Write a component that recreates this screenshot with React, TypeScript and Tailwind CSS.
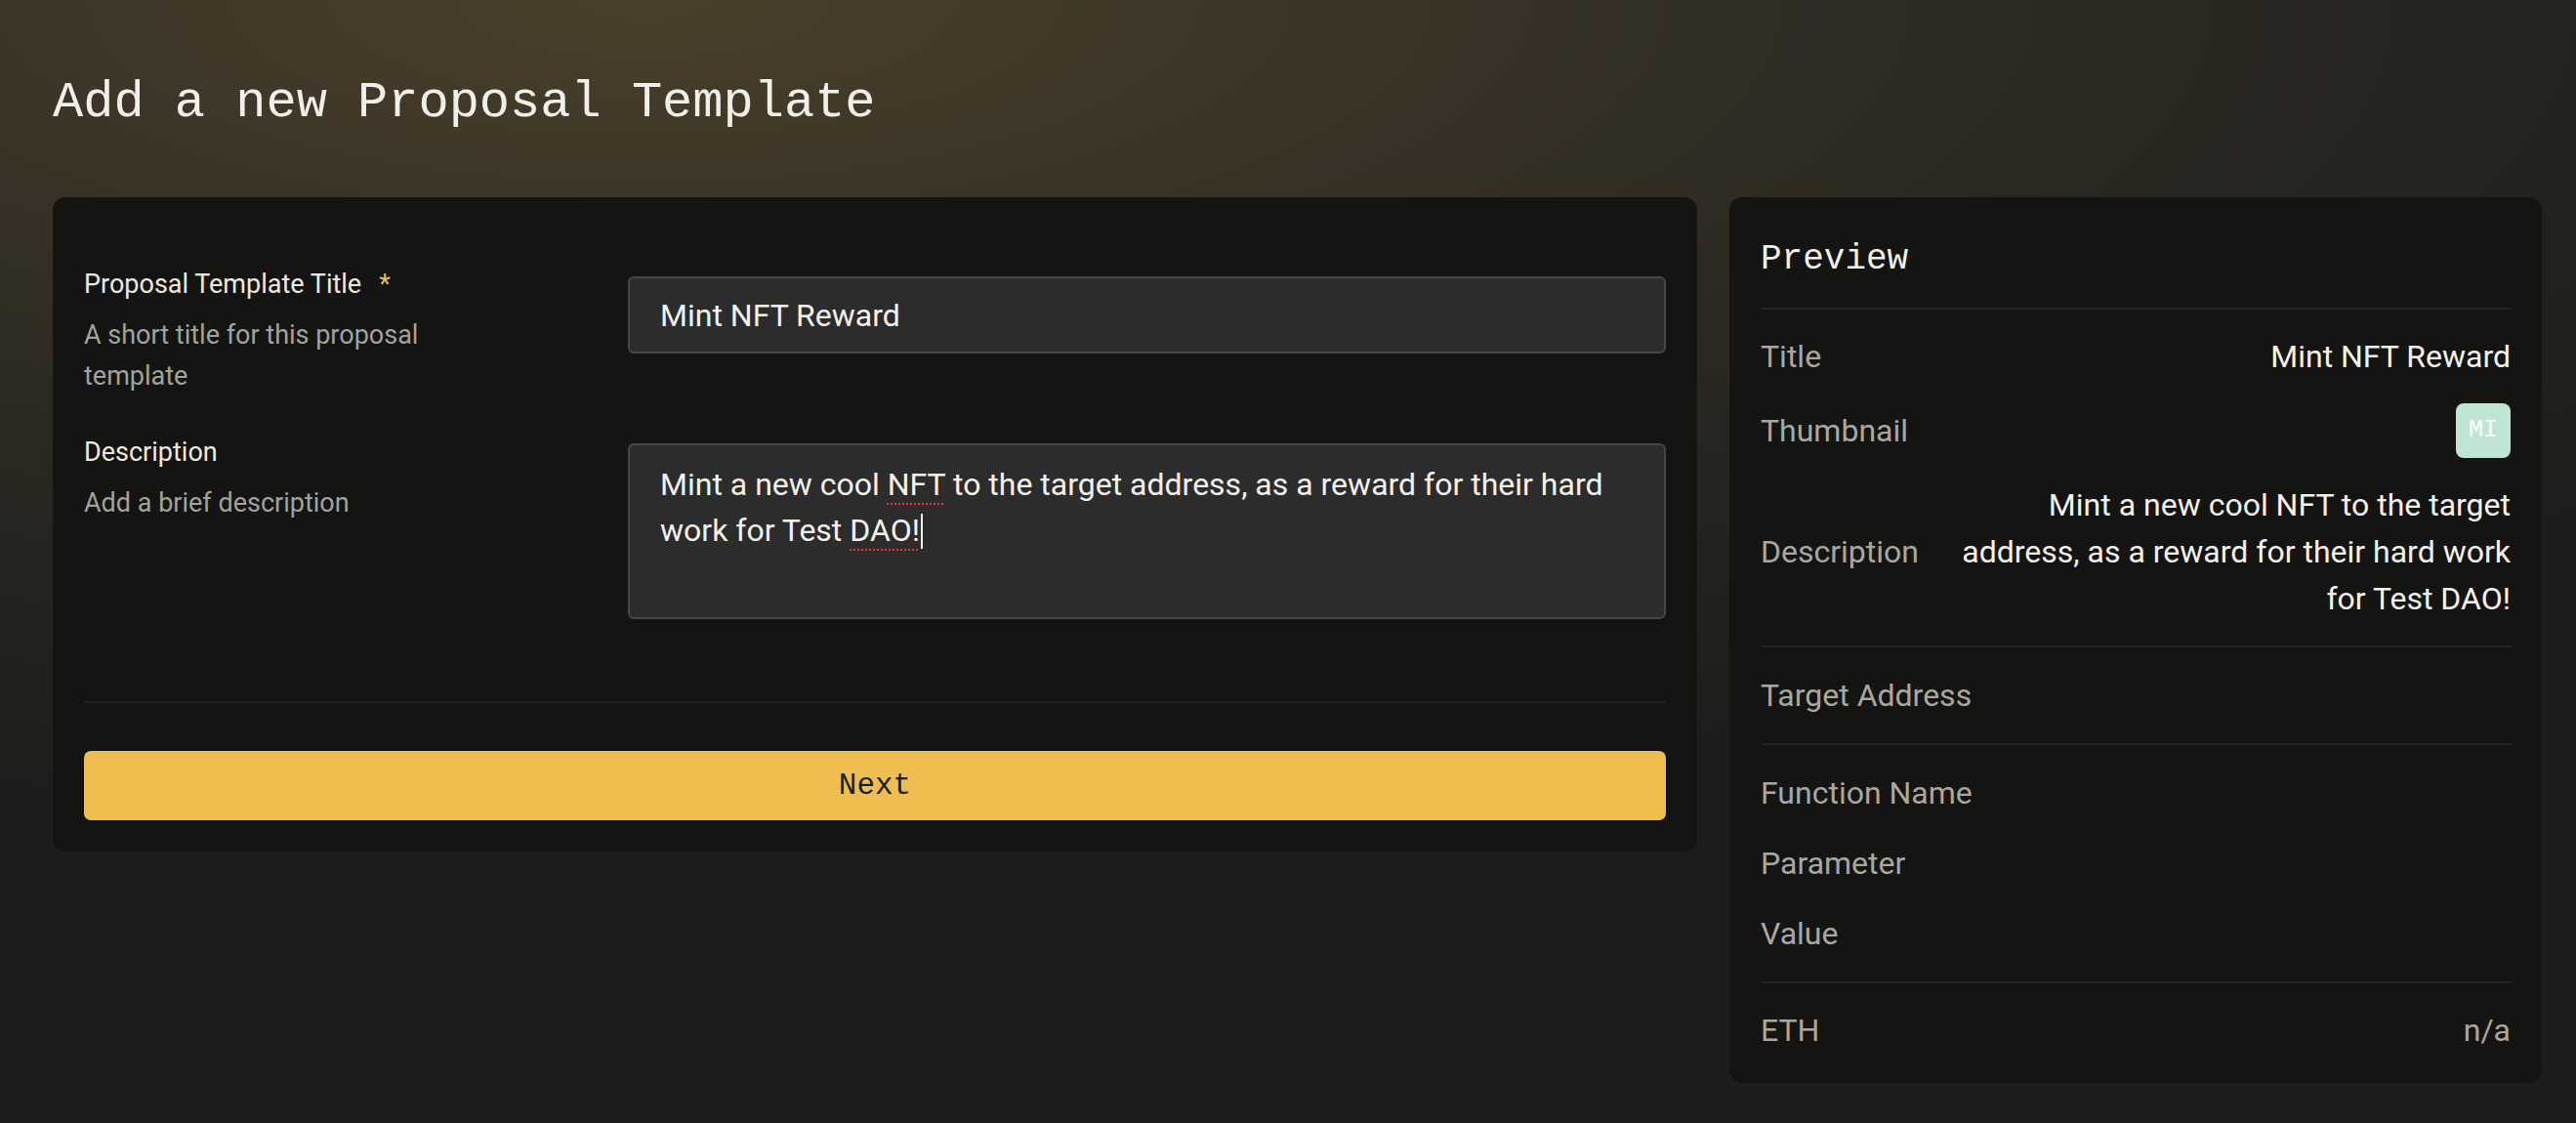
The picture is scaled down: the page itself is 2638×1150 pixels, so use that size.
import React from "react"

const SANS = "font-['Roboto','Liberation_Sans',sans-serif]"
const MONO = "font-['Liberation_Mono','DejaVu_Sans_Mono',monospace]"

function FormRow({
  label,
  help,
  required,
  children,
}: {
  label: string
  help: string
  required?: boolean
  children: React.ReactNode
}) {
  return (
    <div className="flex items-start">
      <div className="w-[557px] shrink-0">
        <div className="text-[27px] leading-[40px] text-[#ebe9e4]">
          {label}
          {required && <span className="ml-[18px] text-[#f0be50]">*</span>}
        </div>
        <p className="mt-[11px] max-w-[420px] text-[27px] leading-[42px] text-[#a5a29b]">{help}</p>
      </div>
      <div className="flex-1">{children}</div>
    </div>
  )
}

function PreviewRow({ label, children }: { label: string; children?: React.ReactNode }) {
  return (
    <div className="flex items-center justify-between gap-8">
      <span className="shrink-0 text-[#a9a7a0]">{label}</span>
      {children}
    </div>
  )
}

function Divider() {
  return <div className="h-[2px] bg-[#222221]" />
}

export default function App() {
  return (
    <div
      className={
        "min-h-screen w-full bg-[radial-gradient(120%_90%_at_25%_0%,#4a3f2a_0%,#2c2922_45%,#1d1d1b_80%)] pl-[54px] pr-[35px] pt-[75px] pb-10 " +
        SANS
      }
    >
      <h1 className={"text-[52px] leading-[62px] text-[#f1efea] " + MONO}>Add a new Proposal Template</h1>

      <div className="mt-[65px] flex items-start gap-[33px]">
        {/* Form card */}
        <div className="flex-1 rounded-[13px] bg-[#141413] px-8 pt-[69px] pb-8">
          <div className="flex flex-col gap-[37px]">
            <FormRow label="Proposal Template Title" required help="A short title for this proposal template">
              <div className="mt-[12px] flex h-[79px] items-center rounded-[6px] border-2 border-[#474747] bg-[#2c2c2c] px-[31px] text-[32px] text-[#f4f2ee]">
                Mint NFT Reward
              </div>
            </FormRow>
            <FormRow label="Description" help="Add a brief description">
              <div className="mt-[11px] h-[180px] rounded-[6px] border-2 border-[#474747] bg-[#2c2c2c] px-[31px] pt-[17px] text-[32px] leading-[47px] text-[#f4f2ee]">
                Mint a new cool{" "}
                <span className="underline decoration-dotted decoration-[#e5342f] decoration-2 underline-offset-[8px]">NFT</span>{" "}
                to the target address, as a reward for their hard work for Test{" "}
                <span className="underline decoration-dotted decoration-[#e5342f] decoration-2 underline-offset-[8px]">DAO!</span>
                <span className="ml-[1px] inline-block h-[36px] w-[2px] bg-[#f4f2ee] align-[-8px]" />
              </div>
            </FormRow>
          </div>

          <div className="mt-[84px]">
            <Divider />
          </div>

          <button
            className={
              "mt-[49px] flex h-[71px] w-full items-center justify-center rounded-[7px] bg-[#f0be50] pt-[2px] text-[31px] text-[#1e1e1c] " +
              MONO
            }
          >
            Next
          </button>
        </div>

        {/* Preview card */}
        <div className="w-[832px] shrink-0 rounded-[13px] bg-[#141413] px-8 pt-[37px] pb-[30px] text-[32px] leading-[48px]">
          <h2 className={"pb-[22px] text-[36px] leading-[54px] text-[#f1efea] " + MONO}>Preview</h2>
          <Divider />

          <div className="flex flex-col gap-6 py-[24px]">
            <PreviewRow label="Title">
              <span className="text-right text-[#f4f2ee]">Mint NFT Reward</span>
            </PreviewRow>
            <PreviewRow label="Thumbnail">
              <div
                className={
                  "flex h-[56px] w-[56px] items-center justify-center rounded-[8px] bg-[#bfe6d2] text-[25px] text-white " + MONO
                }
              >
                MI
              </div>
            </PreviewRow>
            <PreviewRow label="Description">
              <span className="flex-1 text-right text-[#f4f2ee]">
                Mint a new cool NFT to the target address, as a reward for their hard work for Test DAO!
              </span>
            </PreviewRow>
          </div>
          <Divider />

          <div className="py-[25px]">
            <PreviewRow label="Target Address" />
          </div>
          <Divider />

          <div className="flex flex-col gap-6 py-[25px]">
            <PreviewRow label="Function Name" />
            <PreviewRow label="Parameter" />
            <PreviewRow label="Value" />
          </div>
          <Divider />

          <div className="pt-[24px]">
            <PreviewRow label="ETH">
              <span className="text-[#a9a7a0]">n/a</span>
            </PreviewRow>
          </div>
        </div>
      </div>
    </div>
  )
}
